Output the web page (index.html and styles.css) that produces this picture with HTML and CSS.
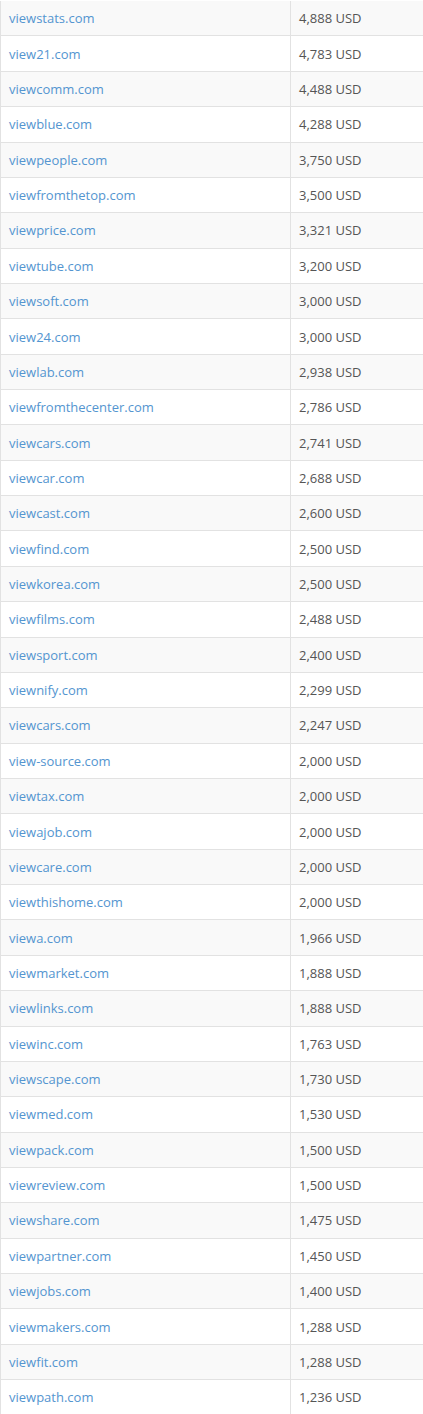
FILE: index.html
```html
<!DOCTYPE html>
<html>
<head>
<meta charset="utf-8">
<link rel="stylesheet" href="styles.css">
</head>
<body>
<table class="domains">
<tbody>
<tr><td class="name"><a href="#">viewstats.com</a></td><td class="price">4,888 USD</td></tr>
<tr><td class="name"><a href="#">view21.com</a></td><td class="price">4,783 USD</td></tr>
<tr><td class="name"><a href="#">viewcomm.com</a></td><td class="price">4,488 USD</td></tr>
<tr><td class="name"><a href="#">viewblue.com</a></td><td class="price">4,288 USD</td></tr>
<tr><td class="name"><a href="#">viewpeople.com</a></td><td class="price">3,750 USD</td></tr>
<tr><td class="name"><a href="#">viewfromthetop.com</a></td><td class="price">3,500 USD</td></tr>
<tr><td class="name"><a href="#">viewprice.com</a></td><td class="price">3,321 USD</td></tr>
<tr><td class="name"><a href="#">viewtube.com</a></td><td class="price">3,200 USD</td></tr>
<tr><td class="name"><a href="#">viewsoft.com</a></td><td class="price">3,000 USD</td></tr>
<tr><td class="name"><a href="#">view24.com</a></td><td class="price">3,000 USD</td></tr>
<tr><td class="name"><a href="#">viewlab.com</a></td><td class="price">2,938 USD</td></tr>
<tr><td class="name"><a href="#">viewfromthecenter.com</a></td><td class="price">2,786 USD</td></tr>
<tr><td class="name"><a href="#">viewcars.com</a></td><td class="price">2,741 USD</td></tr>
<tr><td class="name"><a href="#">viewcar.com</a></td><td class="price">2,688 USD</td></tr>
<tr><td class="name"><a href="#">viewcast.com</a></td><td class="price">2,600 USD</td></tr>
<tr><td class="name"><a href="#">viewfind.com</a></td><td class="price">2,500 USD</td></tr>
<tr><td class="name"><a href="#">viewkorea.com</a></td><td class="price">2,500 USD</td></tr>
<tr><td class="name"><a href="#">viewfilms.com</a></td><td class="price">2,488 USD</td></tr>
<tr><td class="name"><a href="#">viewsport.com</a></td><td class="price">2,400 USD</td></tr>
<tr><td class="name"><a href="#">viewnify.com</a></td><td class="price">2,299 USD</td></tr>
<tr><td class="name"><a href="#">viewcars.com</a></td><td class="price">2,247 USD</td></tr>
<tr><td class="name"><a href="#">view-source.com</a></td><td class="price">2,000 USD</td></tr>
<tr><td class="name"><a href="#">viewtax.com</a></td><td class="price">2,000 USD</td></tr>
<tr><td class="name"><a href="#">viewajob.com</a></td><td class="price">2,000 USD</td></tr>
<tr><td class="name"><a href="#">viewcare.com</a></td><td class="price">2,000 USD</td></tr>
<tr><td class="name"><a href="#">viewthishome.com</a></td><td class="price">2,000 USD</td></tr>
<tr><td class="name"><a href="#">viewa.com</a></td><td class="price">1,966 USD</td></tr>
<tr><td class="name"><a href="#">viewmarket.com</a></td><td class="price">1,888 USD</td></tr>
<tr><td class="name"><a href="#">viewlinks.com</a></td><td class="price">1,888 USD</td></tr>
<tr><td class="name"><a href="#">viewinc.com</a></td><td class="price">1,763 USD</td></tr>
<tr><td class="name"><a href="#">viewscape.com</a></td><td class="price">1,730 USD</td></tr>
<tr><td class="name"><a href="#">viewmed.com</a></td><td class="price">1,530 USD</td></tr>
<tr><td class="name"><a href="#">viewpack.com</a></td><td class="price">1,500 USD</td></tr>
<tr><td class="name"><a href="#">viewreview.com</a></td><td class="price">1,500 USD</td></tr>
<tr><td class="name"><a href="#">viewshare.com</a></td><td class="price">1,475 USD</td></tr>
<tr><td class="name"><a href="#">viewpartner.com</a></td><td class="price">1,450 USD</td></tr>
<tr><td class="name"><a href="#">viewjobs.com</a></td><td class="price">1,400 USD</td></tr>
<tr><td class="name"><a href="#">viewmakers.com</a></td><td class="price">1,288 USD</td></tr>
<tr><td class="name"><a href="#">viewfit.com</a></td><td class="price">1,288 USD</td></tr>
<tr><td class="name"><a href="#">viewpath.com</a></td><td class="price">1,236 USD</td></tr>
</tbody>
</table>
</body>
</html>
```
FILE: styles.css
```css
html, body {
  margin: 0;
  padding: 0;
  background: #ffffff;
}
body {
  font-family: "Open Sans", "Liberation Sans", sans-serif;
  font-size: 13px;
  color: #555555;
  padding-top: 0.6px;
}
.domains {
  width: 440px;
  border-collapse: collapse;
  border-spacing: 0;
  border-left: 1px solid #e2e2e2;
}
.domains td {
  height: 35.37px;
  box-sizing: border-box;
  padding: 0 8px;
  line-height: 18px;
  vertical-align: middle;
  border-bottom: 1px solid #e2e2e2;
}
.domains tr:nth-child(odd) td {
  background: #f9f9f9;
}
.domains td.name {
  width: 290px;
  border-right: 1px solid #e2e2e2;
}
.domains a {
  color: #5495d0;
  text-decoration: none;
}
```
